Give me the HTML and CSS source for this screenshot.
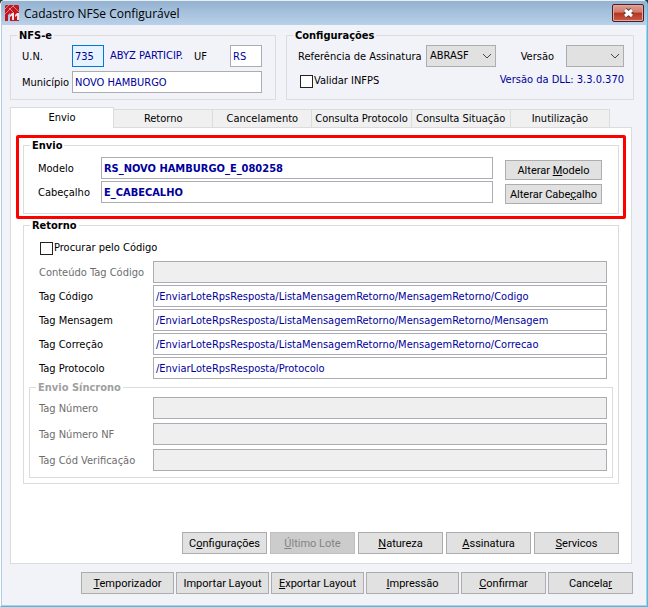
FILE: index.html
```html
<!DOCTYPE html>
<html lang="pt-BR">
<head>
  <meta charset="UTF-8" />
  <meta name="viewport" content="width=device-width, initial-scale=1.0"/>
  <title>Cadastro NFSe Configurável</title>
  <link rel="stylesheet" href="styles.css">
</head>
<body>
  <div class="window">
    <header class="titlebar">
      <svg class="app-icon" width="15" height="17" viewBox="0 0 15 17">
        <path d="M0 1L1 0H13L14 1V16H5V8L3 10V16H0Z" fill="#c4161c"/>
        <path d="M0 4L4 0M0 9L9 0M4 3L9 8M8 1L14 7" stroke="#d08a98" stroke-width="1" fill="none"/>
        <path d="M5 10L7 8H9V15H7V10.500L5 12ZM10 10L12 8H14V15H12V10.500L10 12Z" fill="#f3e4e8"/>
      </svg>
      <span class="title">Cadastro NFSe Configurável</span>
      <button class="close" aria-label="Fechar">
        <svg width="13" height="10" viewBox="0 0 13 10">
          <path d="M3 2L10 8M10 2L3 8" stroke="#5c3a40" stroke-width="5"/>
          <path d="M3 2L10 8M10 2L3 8" stroke="#fff" stroke-width="3"/>
        </svg>
      </button>
    </header>

    <main class="content">
      <div class="top-groups">
        <fieldset class="group nfse">
          <legend>NFS-e</legend>
          <div class="row">
            <label class="short-label" for="un">U.N.</label>
            <input class="code focused" type="text" id="un" value="735" />
            <span class="company">ABYZ PARTICIP.</span>
            <label class="uf-label" for="uf">UF</label>
            <input class="code" type="text" id="uf" value="RS" />
          </div>
          <div class="row">
            <label class="short-label" for="municipio">Município</label>
            <input type="text" id="municipio" value="NOVO HAMBURGO" />
          </div>
        </fieldset>

        <fieldset class="group config">
          <legend>Configurações</legend>
          <div class="row">
            <label class="ref-label" for="assinatura">Referência de Assinatura</label>
            <span class="select select-ref">
              <select id="assinatura"><option>ABRASF</option></select>
              <svg width="10" height="6" viewBox="0 0 10 6"><path d="M1 1L5 5L9 1" fill="none" stroke="#444"/></svg>
            </span>
            <label class="versao-label" for="versao">Versão</label>
            <span class="select select-versao">
              <select id="versao"><option></option></select>
              <svg width="10" height="6" viewBox="0 0 10 6"><path d="M1 1L5 5L9 1" fill="none" stroke="#444"/></svg>
            </span>
          </div>
          <div class="row">
            <label class="check"><input type="checkbox" />Validar INFPS</label>
            <span class="dll">Versão da DLL: 3.3.0.370</span>
          </div>
        </fieldset>
      </div>

      <div class="tabs" role="tablist">
        <button class="tab active" role="tab" aria-selected="true">Envio</button>
        <button class="tab" role="tab">Retorno</button>
        <button class="tab" role="tab">Cancelamento</button>
        <button class="tab" role="tab">Consulta Protocolo</button>
        <button class="tab" role="tab">Consulta Situação</button>
        <button class="tab" role="tab">Inutilização</button>
      </div>

      <section class="panel" role="tabpanel">
        <div class="highlight">
          <fieldset class="group envio">
            <legend>Envio</legend>
            <div class="row">
              <label class="model-label" for="modelo">Modelo</label>
              <input class="strong" type="text" id="modelo" value="RS_NOVO HAMBURGO_E_080258" />
              <button class="btn btn-alter">Alterar <u>M</u>odelo</button>
            </div>
            <div class="row">
              <label class="model-label" for="cabecalho">Cabeçalho</label>
              <input class="strong" type="text" id="cabecalho" value="E_CABECALHO" />
              <button class="btn btn-alter">Alterar Cabe<u>ç</u>alho</button>
            </div>
          </fieldset>
        </div>

        <fieldset class="group retorno">
          <legend>Retorno</legend>
          <label class="check procurar"><input type="checkbox" />Procurar pelo Código</label>
          <div class="fields">
            <div class="row disabled">
              <label class="tag-label" for="conteudo">Conteúdo Tag Código</label>
              <input type="text" id="conteudo" disabled />
            </div>
            <div class="row">
              <label class="tag-label" for="tag-codigo">Tag Código</label>
              <input type="text" id="tag-codigo" value="/EnviarLoteRpsResposta/ListaMensagemRetorno/MensagemRetorno/Codigo" />
            </div>
            <div class="row">
              <label class="tag-label" for="tag-mensagem">Tag Mensagem</label>
              <input type="text" id="tag-mensagem" value="/EnviarLoteRpsResposta/ListaMensagemRetorno/MensagemRetorno/Mensagem" />
            </div>
            <div class="row">
              <label class="tag-label" for="tag-correcao">Tag Correção</label>
              <input type="text" id="tag-correcao" value="/EnviarLoteRpsResposta/ListaMensagemRetorno/MensagemRetorno/Correcao" />
            </div>
            <div class="row">
              <label class="tag-label" for="tag-protocolo">Tag Protocolo</label>
              <input type="text" id="tag-protocolo" value="/EnviarLoteRpsResposta/Protocolo" />
            </div>
          </div>

          <fieldset class="group sincrono" disabled>
            <legend>Envio Síncrono</legend>
            <div class="row disabled">
              <label class="tag-label" for="tag-numero">Tag Número</label>
              <input type="text" id="tag-numero" />
            </div>
            <div class="row disabled">
              <label class="tag-label" for="tag-numero-nf">Tag Número NF</label>
              <input type="text" id="tag-numero-nf" />
            </div>
            <div class="row disabled">
              <label class="tag-label" for="tag-verificacao">Tag Cód Verificação</label>
              <input type="text" id="tag-verificacao" />
            </div>
          </fieldset>
        </fieldset>

        <div class="panel-buttons">
          <button class="btn">C<u>o</u>nfigurações</button>
          <button class="btn" disabled><u>Ú</u>ltimo Lote</button>
          <button class="btn"><u>N</u>atureza</button>
          <button class="btn"><u>A</u>ssinatura</button>
          <button class="btn"><u>S</u>ervicos</button>
        </div>
      </section>

      <footer class="footer-buttons">
        <button class="btn wide"><u>T</u>emporizador</button>
        <button class="btn wide">Importar Layout</button>
        <button class="btn wide"><u>E</u>xportar Layout</button>
        <button class="btn wide"><u>I</u>mpressão</button>
        <button class="btn"><u>C</u>onfirmar</button>
        <button class="btn">Cancela<u>r</u></button>
      </footer>
    </main>
  </div>
</body>
</html>
```
FILE: styles.css
```css
* {
  box-sizing: border-box;
}

body {
  margin: 0;
  background: #2b3440;
  font-family: "DejaVu Sans Condensed", "DejaVu Sans", sans-serif;
  font-size: 11px;
  line-height: 14px;
  color: #000;
}

.window {
  display: flex;
  flex-direction: column;
  min-height: 100vh;
  background: #f2f3f9;
  border-left: 1px solid #fff;
  border-right: 1px solid #41c4e4;
  border-bottom: 1px solid #2cc8e6;
  border-radius: 5px 5px 0 0;
  overflow: hidden;
}

.titlebar {
  display: flex;
  align-items: center;
  height: 25px;
  padding: 0 3px 0 4px;
  background: linear-gradient(#93b2d0, #b9d1ea);
  border-top: 1px solid #e8eef5;
}

.title {
  flex: 1;
  margin: 2px 0 0 4px;
  font-family: "Open Sans", "Noto Sans", sans-serif;
  font-size: 12px;
  line-height: 16px;
}

.close {
  display: flex;
  align-items: center;
  justify-content: center;
  width: 32px;
  height: 18px;
  padding: 0;
  border: 1px solid #4e1c26;
  border-radius: 2px;
  background: linear-gradient(#dda093 0, #cf7b6c 45%, #b5341f 50%, #cb5c45 100%);
  box-shadow: inset 0 0 0 1px #e0a99f;
}

.content {
  flex: 1;
  display: flex;
  flex-direction: column;
  padding: 3px 12px 11px 8px;
  border-left: 1px solid #b4cde6;
  border-right: 1px solid #b4cde6;
  border-bottom: 1px solid #b4cde6;
}

.group {
  min-width: 0;
  margin: 0;
  border: 1px solid #dcdcdc;
}

legend {
  height: 14px;
  padding: 0 2px;
  font-weight: bold;
  line-height: 16px;
}

.row {
  display: flex;
  align-items: center;
}

.row label {
  padding-top: 1px;
}

.top-groups {
  display: grid;
  grid-template-columns: 266fr 348fr;
  gap: 10px;
}

.nfse {
  padding: 3px 13px 6px 6px;
}

.nfse .row {
  padding-left: 5px;
}

.nfse .row + .row {
  margin-top: 4px;
}

.config {
  padding: 3px 9px 6px 6px;
}

.config .row {
  padding-left: 5px;
}

input[type="text"] {
  flex: 1;
  min-width: 0;
  height: 22px;
  padding: 1px 2px 0;
  border: 1px solid #abadb3;
  border-radius: 0;
  background: #fff;
  color: #00009c;
  font: inherit;
}

input[type="text"]:disabled {
  background: #efefef;
}

input[type="text"].code {
  flex: none;
  width: 32px;
}

input[type="text"].focused {
  border-color: #0078d7;
  background: #e6f2ff;
}

input[type="text"].strong {
  font-weight: bold;
}

.short-label {
  width: 50px;
}

.company {
  flex: 1;
  min-width: 0;
  margin-left: 6px;
  white-space: nowrap;
  color: #00009c;
}

.uf-label {
  width: 36px;
}

.ref-label {
  width: 128px;
  white-space: nowrap;
}

.select {
  position: relative;
}

.select select {
  display: block;
  width: 100%;
  height: 22px;
  padding: 0 3px;
  border: 1px solid #adadad;
  border-radius: 0;
  background: #e1e1e1;
  appearance: none;
  font: inherit;
  color: #000;
}

.select svg {
  position: absolute;
  right: 4px;
  top: 8px;
  pointer-events: none;
}

.select-ref {
  width: 70px;
}

.select-versao {
  width: 58px;
}

.versao-label {
  margin: 0 12px 0 auto;
}

.check {
  display: flex;
  align-items: center;
  gap: 1px;
}

.check input {
  width: 13px;
  height: 13px;
  margin: 0;
  border: 1px solid #222;
  background: #fff;
  appearance: none;
}

.config .check {
  margin: 6px 0 0 2px;
}

.dll {
  margin: 4px 0 0 auto;
  color: #00009c;
}

.tabs {
  display: flex;
  align-items: flex-end;
  margin: 7px 24px 0 0;
}

.tab {
  flex: 100 1 0;
  height: 18px;
  padding: 1px 0 0;
  border: 1px solid #dcdcdc;
  border-width: 1px 1px 0 0;
  background: #f0f0f0;
  font: inherit;
  color: #000;
  white-space: nowrap;
}

.tab.active {
  flex-grow: 104;
  height: 21px;
  margin-bottom: -1px;
  padding: 0;
  border-left-width: 1px;
  background: #fff;
  z-index: 1;
}

.panel {
  flex: 1;
  display: flex;
  flex-direction: column;
  margin-right: 2px;
  padding: 7px 5px 9px;
  border: 1px solid #dcdcdc;
  background: #fff;
}

.highlight {
  padding: 0 4px 2px;
  border: 3px solid #f00;
  border-radius: 2px;
}

.envio {
  padding: 5px 16px 10px 6px;
}

.envio .row {
  padding-left: 8px;
}

.envio .row + .row {
  margin-top: 2px;
}

.model-label {
  width: 63px;
}

.retorno {
  margin: -1px 7px 0;
  padding: 9px 5px 5px 6px;
}

.procurar {
  margin-left: 10px;
}

.fields {
  display: flex;
  flex-direction: column;
  gap: 2px;
  margin-top: 6px;
  padding: 0 6px 0 9px;
}

.tag-label {
  width: 114px;
  white-space: nowrap;
}

.disabled {
  color: #6d6d6d;
}

.sincrono {
  margin: 1px 0 0 -1px;
  padding: 3px 5px 6px 6px;
}

.sincrono legend {
  color: #a0a0a0;
}

.sincrono .row {
  padding-left: 3px;
}

.sincrono .row + .row {
  margin-top: 4px;
}

.btn {
  width: 85px;
  height: 22px;
  padding: 1px 0 0;
  border: 1px solid #adadad;
  background: #e1e1e1;
  font-family: Roboto, "Liberation Sans", sans-serif;
  font-size: 11px;
  line-height: 14px;
  color: #000;
  white-space: nowrap;
}

.btn.btn-alter {
  align-self: flex-end;
  width: 97px;
  height: 20px;
  margin: 0 0 -1px 12px;
}

.btn.wide {
  width: 93px;
}

.btn:disabled {
  border-color: #bfbfbf;
  background: #ccc;
  color: #838383;
}

.panel-buttons {
  display: flex;
  justify-content: flex-end;
  gap: 3px;
  margin-top: auto;
  padding-right: 7px;
}

.footer-buttons {
  display: flex;
  justify-content: flex-end;
  gap: 2px;
  margin-top: 8px;
  padding-right: 1px;
}
```
